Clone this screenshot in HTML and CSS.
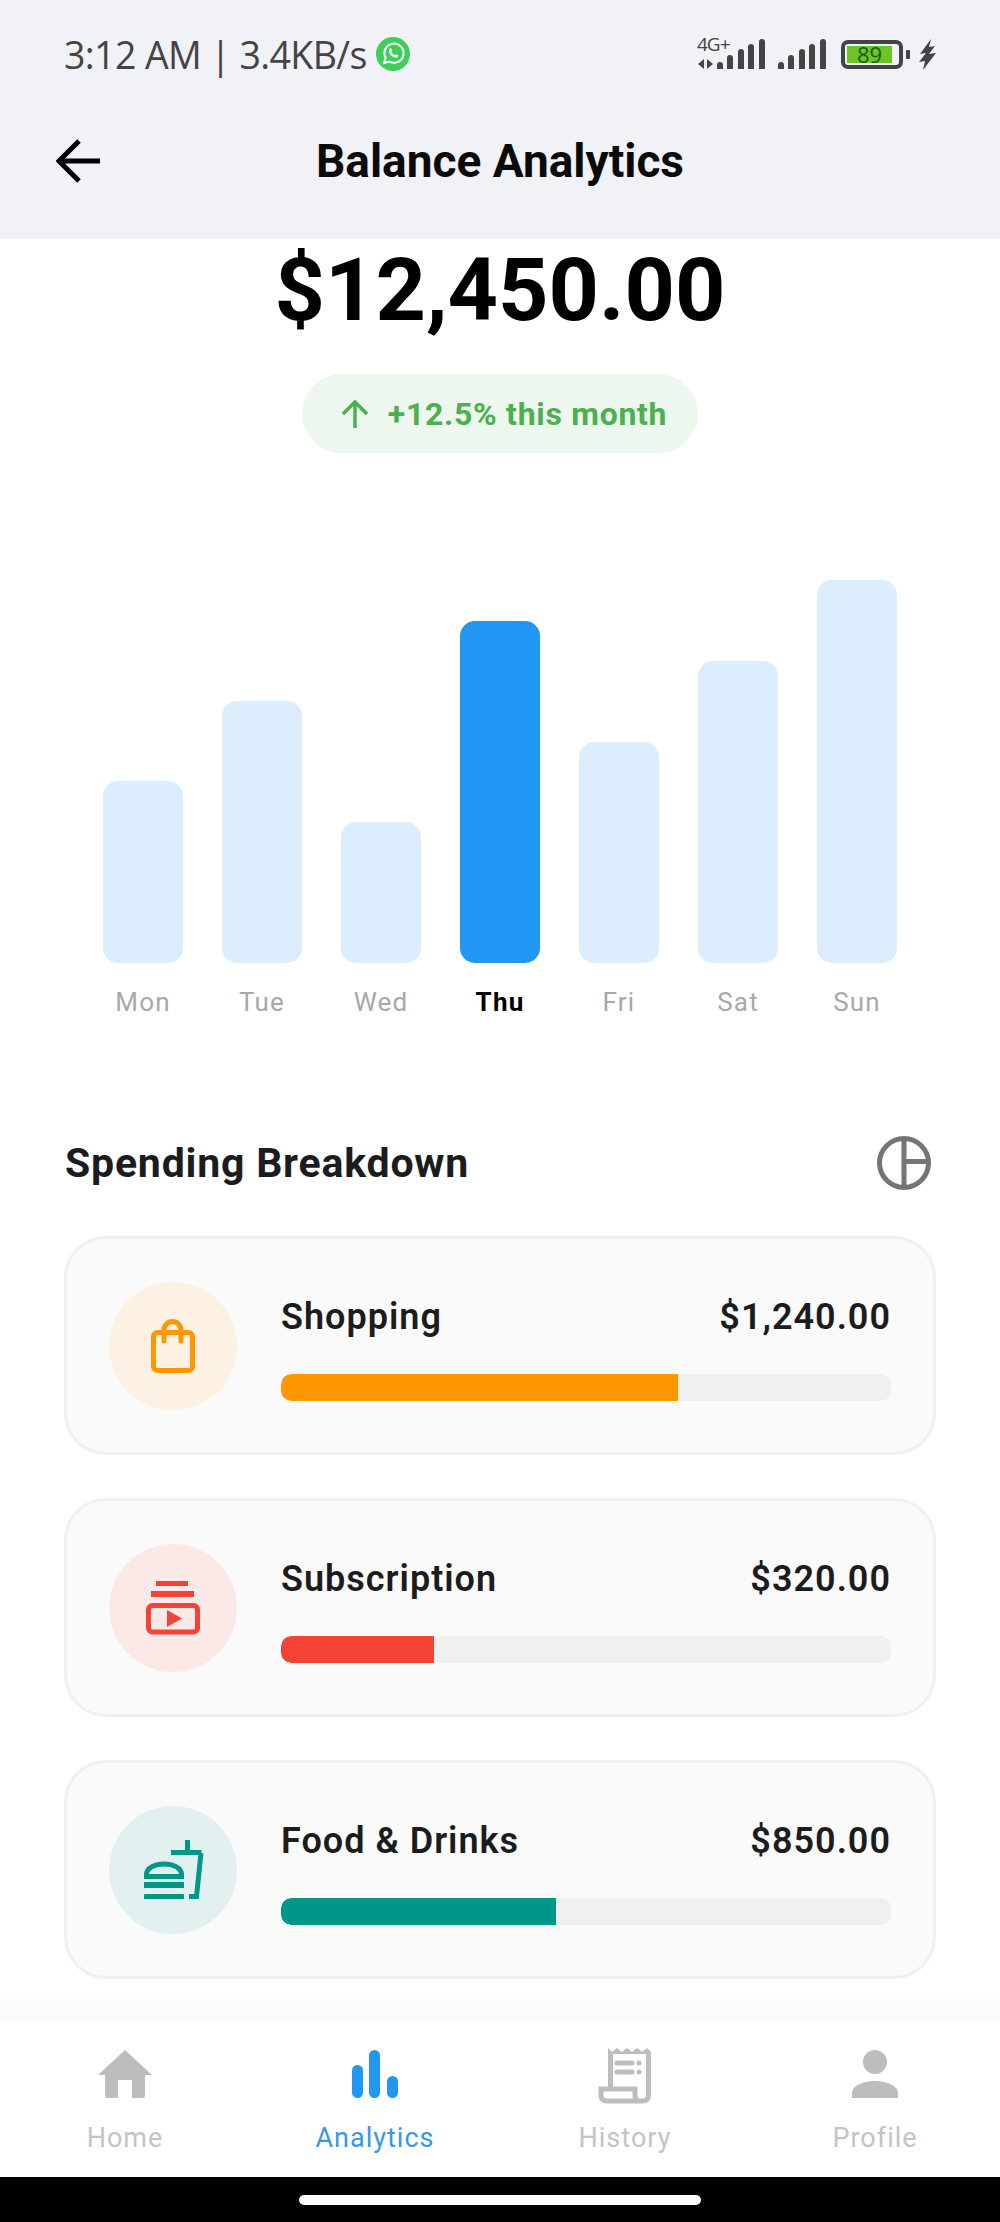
FILE: index.html
```html
<!DOCTYPE html>
<html lang="en">
<head>
<meta charset="utf-8">
<title>Balance Analytics</title>
<link rel="stylesheet" href="styles.css">
</head>
<body>
<div class="app">
  <header class="header">
    <div class="status">
      <div class="status-left">
        <span class="status-text">3:12 AM | 3.4KB/s</span>
        <svg class="wa" viewBox="0 0 34 34"><circle cx="17" cy="17" r="17" fill="#3ecf5a"/><path d="M8 26l1.6-5.2A9.6 9.6 0 1 1 13.4 24.6z" fill="none" stroke="#fff" stroke-width="2"/><path d="M13.5 12.2c.9-1.3 1.800-.9 2.200 0l.7 1.500-.9 1.300c.8 1.500 1.800 2.500 3.300 3.200l1.300-1 1.700.9c.6.500.5 1.500-.3 2.100-1.400 1-3.400.6-5.500-.9-2.900-2.200-3.900-5-2.500-7.100z" fill="#fff"/></svg>
      </div>
      <div class="status-right">
        <div class="net">
          <span class="net-label">4G+</span>
          <svg class="net-arrows" viewBox="0 0 16 10"><path d="M6 0v10L0 5zM9 0l6 5-6 5z" fill="#444"/></svg>
        </div>
        <svg class="signal" viewBox="0 0 48 30"><path d="M0 30v-4q0-3 3-3t3 3v4zM10 30V19q0-3 3-3t3 3v11zM21 30V13q0-3 3-3t3 3v17zM31 30V8q0-3 3-3t3 3v22zM42 30V3q0-3 3-3t3 3v27z" fill="#444"/></svg>
        <svg class="signal second" viewBox="0 0 48 30"><path d="M0 30v-4q0-3 3-3t3 3v4zM10 30V19q0-3 3-3t3 3v11zM21 30V13q0-3 3-3t3 3v17zM31 30V8q0-3 3-3t3 3v22zM42 30V3q0-3 3-3t3 3v27z" fill="#444"/></svg>
        <div class="battery"><span class="battery-fill">89</span></div>
        <span class="battery-nub"></span>
        <svg class="bolt" viewBox="0 0 17 31"><path d="M12 0L1 15l6-1-7 9 6-1-2 9 13-17-7 1 6-8-6 1z" fill="#444"/></svg>
      </div>
    </div>
    <div class="toolbar">
      <svg class="back" viewBox="0 0 44 44"><path d="M44 22H3M23 2L3 22l20 20" fill="none" stroke="#000" stroke-width="5"/></svg>
      <h1 class="title">Balance Analytics</h1>
      <span class="toolbar-end"></span>
    </div>
  </header>

  <main class="main">
    <div class="amount">$12,450.00</div>
    <div class="pill-row">
      <div class="pill">
        <svg class="pill-arrow" viewBox="0 0 28 28"><path d="M14 28V2M2 14L14 2l12 12" fill="none" stroke="#4caf50" stroke-width="3.500"/></svg>
        <span>+12.5% this month</span>
      </div>
    </div>

    <section class="chart">
      <div class="day"><div class="bar" style="height:182px"></div><span class="day-label">Mon</span></div>
      <div class="day"><div class="bar" style="height:262px"></div><span class="day-label">Tue</span></div>
      <div class="day"><div class="bar" style="height:141px"></div><span class="day-label">Wed</span></div>
      <div class="day active"><div class="bar" style="height:342px"></div><span class="day-label">Thu</span></div>
      <div class="day"><div class="bar" style="height:221px"></div><span class="day-label">Fri</span></div>
      <div class="day"><div class="bar" style="height:302px"></div><span class="day-label">Sat</span></div>
      <div class="day"><div class="bar" style="height:383px"></div><span class="day-label">Sun</span></div>
    </section>

    <section class="breakdown">
      <div class="section-head">
        <h2 class="section-title">Spending Breakdown</h2>
        <svg class="pie" viewBox="0 0 54 54"><circle cx="27" cy="27" r="24.500" fill="none" stroke="#757575" stroke-width="5"/><path d="M27 3v48M27 25.500h24" fill="none" stroke="#757575" stroke-width="5"/></svg>
      </div>

      <article class="card">
        <div class="circle orange">
          <svg class="cat-icon" viewBox="0 0 44 54"><rect x="2.500" y="13.500" width="39" height="38" rx="4" fill="none" stroke="#ff9800" stroke-width="5"/><path d="M13 22V11a8.500 8.500 0 0 1 17 0v11" fill="none" stroke="#ff9800" stroke-width="5" stroke-linecap="round"/></svg>
        </div>
        <div class="card-body">
          <div class="card-row"><span class="card-name">Shopping</span><span class="card-value">$1,240.00</span></div>
          <div class="track"><div class="fill fill-orange" style="width:65%"></div></div>
        </div>
      </article>

      <article class="card">
        <div class="circle red">
          <svg class="cat-icon" viewBox="0 0 54 54"><path d="M10 0h32v5H10zM5 10h43v6H5z" fill="#f44336"/><rect x="2.500" y="24.500" width="49" height="26.500" rx="4" fill="none" stroke="#f44336" stroke-width="5"/><path d="M21 29l15 8.500-15 8.500z" fill="#f44336"/></svg>
        </div>
        <div class="card-body">
          <div class="card-row"><span class="card-name">Subscription</span><span class="card-value">$320.00</span></div>
          <div class="track"><div class="fill fill-red" style="width:25%"></div></div>
        </div>
      </article>

      <article class="card">
        <div class="circle teal">
          <svg class="cat-icon food" viewBox="0 0 60 60"><path d="M0 42h40v6H0zM1 54h38q1 0 1 1v4H0v-4q0-1 1-1z" fill="#009688"/><path d="M2.500 34.500v2h35v-2c0-14-35-14-35 0z" fill="none" stroke="#009688" stroke-width="5"/><path d="M27 12.500h30.500M43.500 0v12.500M57 13l-4.500 43.500H45" fill="none" stroke="#009688" stroke-width="5"/></svg>
        </div>
        <div class="card-body">
          <div class="card-row"><span class="card-name">Food &amp; Drinks</span><span class="card-value">$850.00</span></div>
          <div class="track"><div class="fill fill-teal" style="width:45%"></div></div>
        </div>
      </article>
    </section>
  </main>

  <nav class="nav">
    <div class="nav-item">
      <svg class="nav-icon" viewBox="0 0 54 60"><path d="M27 2L0 27h7v21q0 2 2 2h10q1 0 1-1V32h14v17q0 1 1 1h10q2 0 2-2V27h7z" fill="#bdbdbd"/></svg>
      <span class="nav-label">Home</span>
    </div>
    <div class="nav-item active">
      <svg class="nav-icon" viewBox="0 0 54 60"><rect x="4" y="17" width="11" height="33" rx="5.500" fill="#2196f3"/><rect x="21" y="2" width="11" height="48" rx="5.500" fill="#2196f3"/><rect x="39" y="28" width="11" height="22" rx="5.500" fill="#2196f3"/></svg>
      <span class="nav-label">Analytics</span>
    </div>
    <div class="nav-item">
      <svg class="nav-icon" viewBox="0 0 54 60"><path d="M10 6V0l4 4 5-4 5 4 5-4 5 4 5-4 5 4 5-4 4 4v2z" fill="#bdbdbd"/><path d="M12.500 40V4M50.500 4v43q0 6-6 6H9q-6 0-6-6v-6h34v7q0 5 5 5" fill="none" stroke="#bdbdbd" stroke-width="5"/><path d="M19 15h15M19 24h15" stroke="#bdbdbd" stroke-width="5" stroke-linecap="round"/><circle cx="41" cy="15" r="2.500" fill="#bdbdbd"/><circle cx="41" cy="24" r="2.500" fill="#bdbdbd"/></svg>
      <span class="nav-label">History</span>
    </div>
    <div class="nav-item">
      <svg class="nav-icon" viewBox="0 0 54 60"><circle cx="27" cy="14" r="12" fill="#bdbdbd"/><path d="M4 50v-5c0-8 13-12 23-12s23 4 23 12v5z" fill="#bdbdbd"/></svg>
      <span class="nav-label">Profile</span>
    </div>
  </nav>

  <div class="gesture"><span class="gesture-pill"></span></div>
</div>
</body>
</html>
```
FILE: styles.css
```css
* { box-sizing: border-box; }
html, body { margin: 0; padding: 0; background: #fff; }
body { font-family: Roboto, "Liberation Sans", sans-serif; }
.app { width: 1000px; height: 2222px; display: flex; flex-direction: column; overflow: hidden; }

.header { height: 239px; background: #f1f1f8; flex: none; }
.status { height: 111px; display: flex; justify-content: space-between; align-items: flex-start; padding: 37px 64px 0 64px; }
.status-left { display: flex; align-items: center; gap: 9px; height: 34px; }
.status-text { font-family: "Open Sans", sans-serif; font-size: 37.500px; color: #444; white-space: nowrap; letter-spacing: -0.6px; }
.wa { width: 34px; height: 34px; }
.status-right { display: flex; align-items: center; height: 34px; }
.net { width: 20px; height: 34px; position: relative; }
.net-label { position: absolute; left: 0; top: -3px; font-family: "Open Sans", sans-serif; font-size: 19px; line-height: 20px; color: #444; white-space: nowrap; letter-spacing: -1px; }
.net-arrows { position: absolute; left: 1px; top: 22px; width: 16px; height: 10px; }
.signal { width: 48px; height: 30px; }
.signal.second { margin-left: 13px; }
.battery { width: 62px; height: 29px; margin-left: 15px; border: 4px solid #444; border-radius: 7px; padding: 2px; display: flex; }
.battery-fill { width: 45px; background: #6cc42a; color: #1d5a10; font-family: "Open Sans", sans-serif; font-size: 22px; line-height: 17px; text-align: center; }
.battery-nub { width: 4px; height: 9px; background: #444; margin-left: 3px; border-radius: 1px; }
.bolt { width: 17px; height: 31px; margin-left: 9px; }

.toolbar { display: grid; grid-template-columns: 1fr auto 1fr; align-items: center; padding: 0 56px; height: 100px; }
.back { width: 44px; height: 44px; }
.title { margin: 0; font-size: 46px; font-weight: 700; color: #0a0a0a; line-height: 50px; white-space: nowrap; }

.main { flex: 1; min-height: 0; }
.amount { text-align: center; font-size: 88px; font-weight: 700; color: #000; line-height: 102px; margin-top: 0; }
.pill-row { display: flex; justify-content: center; margin-top: 33px; }
.pill { width: 396px; height: 79px; border-radius: 40px; background: #edf7ee; color: #4caf50; font-size: 32px; font-weight: 700; display: flex; align-items: center; justify-content: center; gap: 19px; letter-spacing: 0.7px; padding-left: 8px; }
.pill-arrow { width: 28px; height: 28px; }

.chart { height: 564px; padding: 0 103px; display: flex; justify-content: space-between; align-items: flex-end; }
.day { width: 80px; display: flex; flex-direction: column; align-items: center; }
.bar { width: 80px; background: #dceefe; border-radius: 15px; }
.day.active .bar { background: #2196f3; }
.day-label { margin-top: 24px; font-size: 26px; line-height: 30px; color: #a8a8a8; letter-spacing: 1.2px; }
.day.active .day-label { color: #000; font-weight: 700; }

.breakdown { padding: 0 64px; margin-top: 119px; display: flex; flex-direction: column; }
.section-head { display: flex; justify-content: space-between; align-items: center; height: 54px; margin-bottom: 46px; padding-left: 1px; }
.section-title { margin: 0; font-size: 41px; font-weight: 700; color: #1c1c1e; letter-spacing: 0.8px; white-space: nowrap; }
.pie { width: 54px; height: 54px; margin-right: 5px; }

.card { height: 219px; border: 3px solid #f0f0f0; border-radius: 42px; background: #fafafa; display: flex; align-items: center; padding: 0 42px; margin-bottom: 43px; }
.circle { width: 128px; height: 128px; border-radius: 50%; display: flex; align-items: center; justify-content: center; flex: none; }
.orange { background: #fdf1e3; }
.red { background: #fbe9e8; }
.teal { background: #e2f1f0; }
.cat-icon { width: 54px; height: 54px; }
.cat-icon.food { width: 60px; height: 60px; margin-left: 2px; }
.card-body { flex: 1; margin-left: 44px; padding-top: 7px; }
.card-row { display: flex; justify-content: space-between; align-items: center; height: 40px; margin-bottom: 37px; }
.card-name, .card-value { font-size: 36px; font-weight: 600; color: #1c1c1e; white-space: nowrap; letter-spacing: 1px; }
.track { height: 27px; border-radius: 10px; background: #f0f0f0; overflow: hidden; }
.fill { height: 100%; border-radius: 10px 0 0 10px; }
.fill-orange { background: #ff9800; }
.fill-red { background: #f44336; }
.fill-teal { background: #009688; }

.nav { height: 156px; flex: none; display: grid; grid-template-columns: repeat(4, 1fr); background: #fff; position: relative; }
.nav::before { content: ""; position: absolute; left: 0; right: 0; top: -30px; height: 30px; background: linear-gradient(#fff, #f9f9f9); }
.nav-item { display: flex; flex-direction: column; align-items: center; padding-top: 27px; }
.nav-icon { width: 54px; height: 60px; overflow: visible; }
.nav-label { font-size: 27px; line-height: 32px; margin-top: 14px; color: #c4c4c4; letter-spacing: 1px; }
.nav-item.active .nav-label { color: #3a97e4; }

.gesture { height: 45px; flex: none; background: #000; padding-top: 18px; display: flex; justify-content: center; align-items: flex-start; }
.gesture-pill { width: 402px; height: 10px; border-radius: 5px; background: #fff; }
```
